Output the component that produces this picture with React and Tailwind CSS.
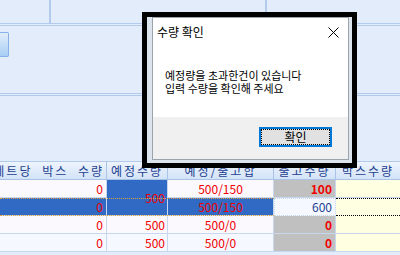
const ko = "font-['Noto_Sans_CJK_KR',sans-serif]";

function Cell({ className = "", children }) {
  return (
    <div
      className={`flex items-center border-r border-b border-[#c7d8ee] overflow-hidden whitespace-nowrap ${className}`}
    >
      {children}
    </div>
  );
}

function Header({ className = "", children }) {
  return (
    <div
      className={`flex items-center justify-center border-r border-b border-[#a9c3e6] bg-linear-to-b from-[#eef4fd] to-[#d3e3f7] text-[12px] tracking-[2px] text-[#1d3f8f] overflow-hidden whitespace-nowrap ${className}`}
    >
      {children}
    </div>
  );
}

function Grid() {
  return (
    <div className="grid grid-cols-[107px_61px_106px_62px_64px] grid-rows-[18px_18px_18px_18px_18px] text-[12px] leading-none">
      {/* header */}
      <Header className="col-start-1 row-start-1 justify-end pr-[2px] [word-spacing:5px]">
        세트당 박스 수량
      </Header>
      <Header className="col-start-2 row-start-1">예정수량</Header>
      <Header className="col-start-3 row-start-1">예정/출고합</Header>
      <Header className="col-start-4 row-start-1">출고수량</Header>
      <Header className="col-start-5 row-start-1 border-r-0">박스수량</Header>

      {/* row 1 */}
      <Cell className="col-start-1 row-start-2 justify-end pr-[3px] bg-[#fbf8fe] text-[#f00000]">0</Cell>
      <Cell className="col-start-2 row-start-2 row-span-2 justify-end pr-[2px] bg-[#316ac5] text-[#f00000]">500</Cell>
      <Cell className="col-start-3 row-start-2 justify-center bg-[#fbf8fe] text-[#f00000]">500/150</Cell>
      <Cell className="col-start-4 row-start-2 justify-end pr-[3px] bg-[#c0c0c0] text-[#f00000] font-bold">100</Cell>
      <Cell className="col-start-5 row-start-2 bg-[#ffffe1] border-r-0" />

      {/* row 2 (selected) */}
      <Cell className="col-start-1 row-start-3 justify-end pr-[3px] bg-[#316ac5] text-[#f00000]">0</Cell>
      <Cell className="col-start-3 row-start-3 justify-center bg-[#316ac5] text-[#f00000]">500/150</Cell>
      <Cell className="col-start-4 row-start-3 justify-end pr-[3px] bg-[#f5f9ff] text-[#1d3f8f] border border-dotted border-[#555]">600</Cell>
      <Cell className="col-start-5 row-start-3 bg-[#ffffe1] border-r-0 border-t border-b border-dotted border-black" />
      <div className="col-start-1 col-span-3 row-start-3 border-y border-dotted border-[#e0a23c] pointer-events-none" />

      {/* row 3 */}
      <Cell className="col-start-1 row-start-4 justify-end pr-[3px] bg-[#fbf8fe] text-[#f00000]">0</Cell>
      <Cell className="col-start-2 row-start-4 justify-end pr-[2px] bg-[#fbf8fe] text-[#f00000]">500</Cell>
      <Cell className="col-start-3 row-start-4 justify-center bg-[#fbf8fe] text-[#f00000]">500/0</Cell>
      <Cell className="col-start-4 row-start-4 justify-end pr-[3px] bg-[#c0c0c0] text-[#f00000] font-bold">0</Cell>
      <Cell className="col-start-5 row-start-4 bg-[#ffffe1] border-r-0" />

      {/* row 4 */}
      <Cell className="col-start-1 row-start-5 justify-end pr-[3px] bg-[#f5f9ff] text-[#f00000]">0</Cell>
      <Cell className="col-start-2 row-start-5 justify-end pr-[2px] bg-[#f5f9ff] text-[#f00000]">500</Cell>
      <Cell className="col-start-3 row-start-5 justify-center bg-[#f5f9ff] text-[#f00000]">500/0</Cell>
      <Cell className="col-start-4 row-start-5 justify-end pr-[3px] bg-[#c0c0c0] text-[#f00000] font-bold">0</Cell>
      <Cell className="col-start-5 row-start-5 bg-[#ffffe1] border-r-0" />
    </div>
  );
}

function Dialog() {
  return (
    <div className="absolute left-[142px] top-[12px] w-[215px] h-[156px] border-[5px] border-black bg-[#dce4ee] pl-[5px] pr-[3px] pb-[3px] flex">
      <div className="flex-1 flex flex-col border border-[#9ba3ad]">
        <div className="h-[99px] bg-white">
          <div className="flex items-center justify-between pl-[4px] pr-[9px] pt-[8px] leading-[12px] text-[12px] text-black">
            <span>수량 확인</span>
            <svg width="11" height="11" viewBox="0 0 11 11" className="text-black">
              <path d="M0.5 0.5 L10.5 10.5 M10.5 0.5 L0.5 10.5" stroke="currentColor" strokeWidth="1" />
            </svg>
          </div>
          <div className="mt-[31px] pl-[12px] text-[11px] leading-[13px] text-black">
            <p>예정량을 초과한건이 있습니다</p>
            <p>입력 수량을 확인해 주세요</p>
          </div>
        </div>
        <div className="flex-1 bg-[#f0f0f0] flex justify-end pr-[16px] pt-[10px]">
          <button className="w-[73px] h-[20px] border-2 border-[#0078d7] bg-[#e1e1e1] p-0">
            <span className="flex h-full w-full items-center justify-center border border-dotted border-black text-[12px] leading-none text-black">
              확인
            </span>
          </button>
        </div>
      </div>
    </div>
  );
}

export default function App() {
  return (
    <div className={`relative w-[400px] h-[255px] overflow-hidden bg-[#e2ecfb] ${ko}`}>
      {/* toolbar strip */}
      <div className="flex h-[23px]">
        <div className="w-[49px]" />
        <div className="w-[2px] bg-[#b3cbeb]" />
        <div className="w-[214px]" />
        <div className="w-[2px] bg-[#b3cbeb]" />
      </div>
      <div className="h-[3px] border-y border-[#b3cbeb]" />

      {/* search area */}
      <div className="h-[67px] pt-[6px]">
        <div className="w-[9px] h-[25px] rounded-r-[2px] border border-l-0 border-[#86b0e6] bg-linear-to-b from-[#e2eefb] to-[#a8cdf3]" />
      </div>
      <div className="h-[3px] border-y border-[#b3cbeb]" />

      <div className="h-[66px] border-b border-[#b3cbeb]" />

      <Grid />

      <Dialog />
    </div>
  );
}
